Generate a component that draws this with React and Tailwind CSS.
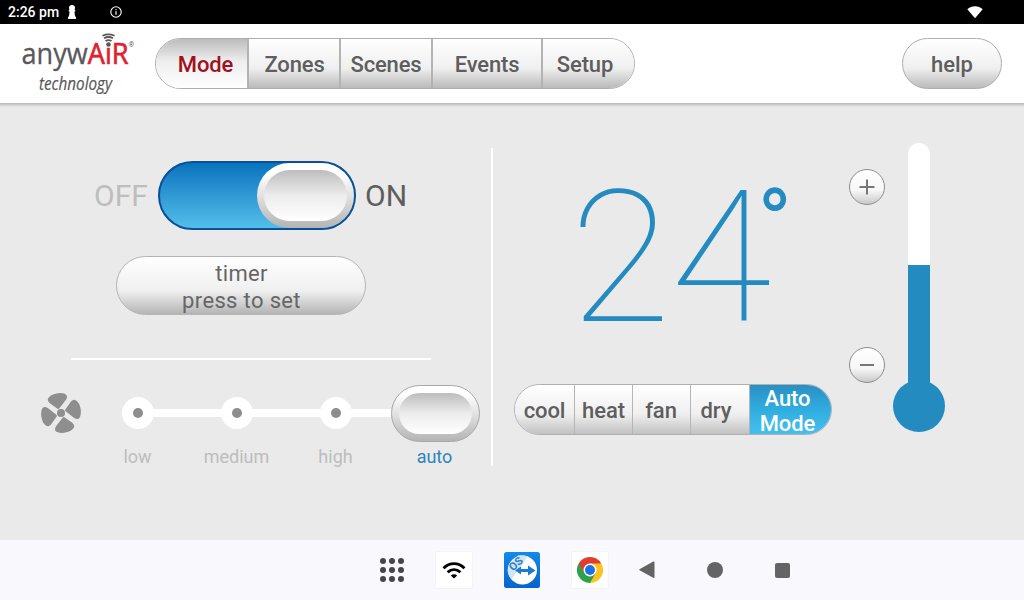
import { useState } from 'react';
import clsx from 'clsx';

const NAV_TABS = [
  { id: 'Mode',   className: 'w-[91px] pl-[8px]' },
  { id: 'Zones',  className: 'w-[92px] pl-px' },
  { id: 'Scenes', className: 'w-[92px]' },
  { id: 'Events', className: 'w-[110px]' },
  { id: 'Setup',  className: 'w-[93px] pr-[7px]' },
];

const AC_MODES = [
  { id: 'cool', className: 'w-[59px]' },
  { id: 'heat', className: 'w-[58px]' },
  { id: 'fan',  className: 'w-[58px] pr-px' },
  { id: 'dry',  className: 'w-[59px] pr-[8px]' },
  { id: 'Auto Mode', className: 'w-[82px] pl-2 pr-[14px]' },
];

const FAN_SPEEDS = ['low', 'medium', 'high', 'auto'];

const MIN_TEMP = 16;
const MAX_TEMP = 32;

// ── Status bar ──────────────────────────────────────────────────────────────
function StatusBar() {
  return (
    <div className="flex h-6 items-center bg-black pl-2 pr-[41px] text-white">
      <span className="w-[51px] whitespace-nowrap text-[14px] font-medium leading-6">2:26 pm</span>
      <svg className="ml-[8px]" width="10" height="14" viewBox="0 0 10 14" fill="currentColor">
        <circle cx="5" cy="3" r="3" />
        <path d="M1.800 5h6.400v1.500H7.400l.6 4.500 1 1.200V14H1v-1.800L2 11l.6-4.500H1.800z" />
      </svg>
      <svg className="ml-[33px]" width="12" height="12" viewBox="0 0 12 12" fill="none" stroke="currentColor" strokeWidth="1.100">
        <circle cx="6" cy="6" r="5.200" />
        <path d="M6 5.300v3.500M6 3.200v1.100" strokeWidth="1.200" />
      </svg>
      <svg className="ml-auto" width="16" height="13" viewBox="0 0 16 13" fill="currentColor">
        <path d="M.3 3.200C4.600-.8 11.400-.8 15.700 3.200L8 12.300z" />
      </svg>
    </div>
  );
}

function Logo() {
  return (
    <svg width="114" height="64" viewBox="0 0 114 64" className="overflow-visible font-['Open_Sans',sans-serif]">
      <text x="0.500" y="31" fontSize="30" fill="#58585b" stroke="#58585b" strokeWidth="0.300" textLength="107" lengthAdjust="spacingAndGlyphs">
        anyw<tspan fill="#df2230" stroke="#df2230" strokeWidth="0.700">AıR</tspan>
      </text>
      <text x="107.500" y="14" fontSize="6.500" fill="#58585b">®</text>
      <text x="18" y="57" fontSize="17.500" fontStyle="italic" fill="#58585b" stroke="#58585b" strokeWidth="0.200" textLength="73" lengthAdjust="spacingAndGlyphs">technology</text>
      <circle cx="87.500" cy="11.500" r="2.300" fill="#58585b" />
      <path d="M84.500 8q3-1.800 6 0M83 5.300q4.500-2.600 9 0M81.500 2.800q6-2.800 12 0" fill="none" stroke="#58585b" strokeWidth="1.800" />
    </svg>
  );
}

// ── Header ──────────────────────────────────────────────────────────────────
function Header({ tab, onTab }) {
  return (
    <header className="flex h-[79px] items-start bg-white pl-[21px] pr-[22px]">
      <div className="pt-[9px]"><Logo /></div>
      <nav className="ml-5 mt-[14px] flex h-[51px] overflow-hidden rounded-full border border-[#adadad]">
        {NAV_TABS.map((t, i) => (
          <button
            key={t.id}
            onClick={() => onTab(t.id)}
            className={clsx(
              'pt-[2px] text-[22px] font-medium tracking-[-0.15px]',
              t.className,
              i > 0 && 'border-l-2 border-[#b3b3b3]',
              tab === t.id
                ? 'bg-linear-to-b from-[#bcbcbc] via-[#eeeeee] via-45% to-white text-[#a01020]'
                : 'bg-linear-to-b from-white via-[#efefef] via-60% to-[#bababa] text-[#5e5e5e]',
            )}
          >
            {t.id}
          </button>
        ))}
      </nav>
      <button className="ml-auto mt-[14px] h-[51px] w-[100px] rounded-full border border-[#adadad] bg-linear-to-b from-white via-[#efefef] via-60% to-[#bababa] pt-[2px] text-[22px] font-medium text-[#5e5e5e]">
        help
      </button>
    </header>
  );
}

// Raised bezel with a sunken face, shared by the power switch and the fan slider
function Knob({ className }) {
  return (
    <div className={clsx('rounded-full bg-linear-to-b from-white from-15% via-[#e2e2e2] to-[#b4b4b4] p-[7px]', className)}>
      <div className="h-full w-full rounded-full bg-linear-to-b from-[#bdbdbd] via-[#ececec] via-50% to-white" />
    </div>
  );
}

function PowerSwitch({ on, onToggle }) {
  return (
    <div className="flex items-center text-[30px] leading-none">
      <span className={clsx('w-[64px]', on ? 'text-[#bdbdbd]' : 'text-[#5e5e5e]')}>OFF</span>
      <button
        onClick={onToggle}
        className={clsx(
          'flex h-[69px] w-[198px] rounded-full border-2 border-[#0a4f98] bg-linear-to-b from-[#0573be] to-[#52bfea]',
          on ? 'justify-end' : 'justify-start',
        )}
      >
        <Knob className="h-[65px] w-[97px]" />
      </button>
      <span className={clsx('ml-[9px]', on ? 'text-[#5e5e5e]' : 'text-[#bdbdbd]')}>ON</span>
    </div>
  );
}

function FanIcon() {
  return (
    <svg width="40" height="40" viewBox="0 0 40 40" fill="#8e8e8e">
      {[0, 90, 180, 270].map(a => (
        <path
          key={a}
          transform={`rotate(${a} 20 20)`}
          d="M16.500 15.700L8.500 10Q6 7.800 7.200 5.200Q9.500 1.200 17 .2Q23.500-.3 25.600 2.200Q26.600 4 25 6.800L18.600 15Q17.600 16.400 16.500 15.700z"
        />
      ))}
      <circle cx="20" cy="20" r="4" />
    </svg>
  );
}

function FanSlider({ speed, onSpeed }) {
  return (
    <div className="mt-[25px] flex items-start pl-[41px]">
      <div className="mt-2"><FanIcon /></div>
      <div className="ml-[7px] flex bg-[linear-gradient(#fff,#fff)] bg-[length:297px_8px] bg-[position:50px_24px] bg-no-repeat">
        {FAN_SPEEDS.map(s => (
          <button key={s} onClick={() => onSpeed(s)} className="flex w-[99px] flex-col items-center">
            <div className="flex h-[57px] items-center">
              {speed === s ? (
                <Knob className="ml-[2px] h-[57px] w-[89px] border border-[#a8a8a8]" />
              ) : (
                <div className="mb-px flex h-8 w-8 items-center justify-center rounded-full bg-white">
                  <div className="h-[10px] w-[10px] rounded-full bg-[#8e8e8e]" />
                </div>
              )}
            </div>
            <span className={clsx('mt-[5px] text-[18px] leading-5', speed === s ? 'text-[#2b86b8]' : 'text-[#bdbdbd]')}>
              {s}
            </span>
          </button>
        ))}
      </div>
    </div>
  );
}

function ModeBar({ mode, onMode }) {
  return (
    <div className="flex h-[51px] w-[318px] overflow-hidden rounded-full border border-[#b0b0b0]">
      {AC_MODES.map((m, i) => (
        <button
          key={m.id}
          onClick={() => onMode(m.id)}
          className={clsx(
            'text-[22px] font-medium tracking-[-0.1px]',
            m.className,
            i > 0 && 'border-l border-[#b5b5b5]',
            mode === m.id
              ? 'bg-linear-to-b from-[#2a8fc4] via-[#30ade0] via-50% to-[#45c0ee] pt-[2px] leading-[24.500px] text-white'
              : 'bg-linear-to-b from-white via-[#efefef] via-60% to-[#c2c2c2] pt-[2px] leading-[25px] text-[#5e5e5e]',
          )}
        >
          {m.id}
        </button>
      ))}
    </div>
  );
}

function StepButton({ label, onClick, children }) {
  return (
    <button
      aria-label={label}
      onClick={onClick}
      className="flex h-9 w-9 items-center justify-center rounded-full border border-[#8c8c8c] bg-linear-to-b from-white via-[#f7f7f7] via-60% to-[#c9c9c9]"
    >
      <svg width="16" height="16" viewBox="0 0 16 16" stroke="#777" strokeWidth="2">{children}</svg>
    </button>
  );
}

function Thermometer({ temp }) {
  const fill = ((temp - MIN_TEMP) / (MAX_TEMP - MIN_TEMP)) * 240;
  return (
    <div className="flex w-[52px] flex-col items-center">
      <div className="flex h-[242px] w-[22px] flex-col justify-end overflow-hidden rounded-t-full bg-white">
        <div className="bg-[#248bc0]" style={{ height: fill }} />
      </div>
      <div className="-mt-[5px] h-[52px] w-[52px] rounded-full bg-[#248bc0]" />
    </div>
  );
}

// ── Android navigation bar ──────────────────────────────────────────────────
function AndroidBar() {
  return (
    <footer className="flex h-[60px] items-center bg-[#f9f9fd] pl-[380px] text-[#646464]">
      <svg width="24" height="24" viewBox="0 0 24 24" fill="#46464a">
        {[3, 12, 21].map(y => [3, 12, 21].map(x => <circle key={`${x}-${y}`} cx={x} cy={y} r="3" />))}
      </svg>

      <div className="ml-8 flex gap-8">
        <div className="flex h-9 w-9 items-center justify-center bg-white shadow-[0_0_1px_#ddd]">
          <svg width="24" height="18" viewBox="0 0 24 18" fill="none" stroke="#000" strokeWidth="2.800">
            <path d="M1.500 7.200C7.500 1 16.500 1 22.500 7.200M5.600 11.300C9.500 7.600 14.500 7.600 18.400 11.300" />
            <path d="M8.800 14.500q3.200-2.400 6.400 0L12 17.600z" fill="#000" stroke="none" />
          </svg>
        </div>

        <svg width="36" height="36" viewBox="0 0 36 36">
          <defs>
            <linearGradient id="tv" x1="0" y1="0" x2="0" y2="1">
              <stop offset="0" stopColor="#138aea" />
              <stop offset="1" stopColor="#0864cf" />
            </linearGradient>
          </defs>
          <rect width="36" height="36" rx="2.500" fill="url(#tv)" />
          <circle cx="18.500" cy="18" r="14.500" fill="#fff" />
          <path d="M7.500 27.500A14.500 14.500 0 0 1 5 12L14 3.500Q19 2.500 23.500 4.400z" fill="#d3e5f0" />
          <path d="M11 18.500l6-4v2.500h7v-3.500l7.500 5-7.500 5v-3.500h-7v2.500z" fill="#1c7ad2" />
          <text x="12" y="15.500" fontSize="11" fontWeight="700" fill="#2680cd" textAnchor="middle" transform="rotate(-42 12 12)">OS</text>
        </svg>

        <div className="flex h-9 w-9 items-center justify-center bg-white shadow-[0_0_1px_#ddd]">
          <svg width="26" height="26" viewBox="0 0 26 26">
            <path d="M13 13L1.740 6.500A13 13 0 0 1 24.260 6.500z" fill="#e33b2e" />
            <path d="M13 13L24.260 6.500A13 13 0 0 1 13 26z" fill="#fcc31e" />
            <path d="M13 13L13 26A13 13 0 0 1 1.740 6.500z" fill="#2da14c" />
            <path d="M13 6.500H24.260L18.600 16.200z" fill="#fcc31e" />
            <path d="M18.630 16.250L13 26L7.400 16.200z" fill="#2da14c" />
            <path d="M7.370 16.250L1.740 6.500H13z" fill="#e33b2e" />
            <circle cx="13" cy="13" r="6.500" fill="#fff" />
            <circle cx="13" cy="13" r="5" fill="#1b72e8" />
          </svg>
        </div>
      </div>

      <svg className="ml-[31px]" width="16" height="18" viewBox="0 0 16 18" fill="currentColor">
        <path d="M.5 8.300L14.200.6Q15.500.2 15.500 1.500V16Q15.500 17.200 14.200 16.800L.5 9.300Q0 8.800.5 8.300z" />
      </svg>
      <div className="ml-[52px] h-4 w-4 rounded-full bg-current" />
      <div className="ml-[52px] h-[15px] w-[15px] rounded-[2px] bg-current" />
    </footer>
  );
}

export default function App() {
  const [tab, setTab]     = useState('Mode');
  const [on, setOn]       = useState(true);
  const [speed, setSpeed] = useState('auto');
  const [mode, setMode]   = useState('Auto Mode');
  const [temp, setTemp]   = useState(24);

  return (
    <div className="flex h-[600px] w-[1024px] flex-col overflow-hidden bg-[#eaeaea] font-['Roboto',sans-serif]">
      <StatusBar />
      <Header tab={tab} onTab={setTab} />
      <div className="h-[4px] bg-linear-to-b from-[#b5b5b5] to-[#eaeaea]" />

      <main className="flex flex-1 items-start">
        {/* ── Power, timer, fan ─────────────────────────────────────────── */}
        <section className="w-[491px] pt-[54px]">
          <div className="pl-[94px]">
            <PowerSwitch on={on} onToggle={() => setOn(!on)} />
          </div>
          <button className="ml-[116px] mt-[26px] h-[59px] w-[250px] rounded-full border border-[#b5b5b5] bg-linear-to-b from-white via-[#efefef] via-60% to-[#b5b5b5] pl-px pt-[3px] text-[22px] leading-[27px] tracking-[0.35px] text-[#666]">
            timer<br />press to set
          </button>
          <div className="ml-[71px] mt-[43px] h-[2px] w-[360px] bg-white" />
          <FanSlider speed={speed} onSpeed={setSpeed} />
        </section>

        <div className="mt-[41px] h-[318px] w-[2px] bg-white" />

        {/* ── Temperature and mode ──────────────────────────────────────── */}
        <section className="w-[356px] pl-[21px] pt-[41px]">
          <div className="flex h-[236px] items-start pl-[56px] text-[#248bc0]">
            <span className="pt-[2px] text-[184px] font-thin leading-[216px]">{temp}</span>
            <span className="-ml-[14px] mt-[51px] text-[92px] font-normal leading-[50px]">°</span>
          </div>
          <ModeBar mode={mode} onMode={setMode} />
        </section>

        <div className="flex flex-col gap-[142px] pt-[62px]">
          <StepButton label="warmer" onClick={() => setTemp(Math.min(temp + 1, MAX_TEMP))}>
            <path d="M8 .5v15M.5 8h15" />
          </StepButton>
          <StepButton label="cooler" onClick={() => setTemp(Math.max(temp - 1, MIN_TEMP))}>
            <path d="M1 8h14" />
          </StepButton>
        </div>
        <div className="ml-2 pt-[36px]">
          <Thermometer temp={temp} />
        </div>
      </main>

      <AndroidBar />
    </div>
  );
}
